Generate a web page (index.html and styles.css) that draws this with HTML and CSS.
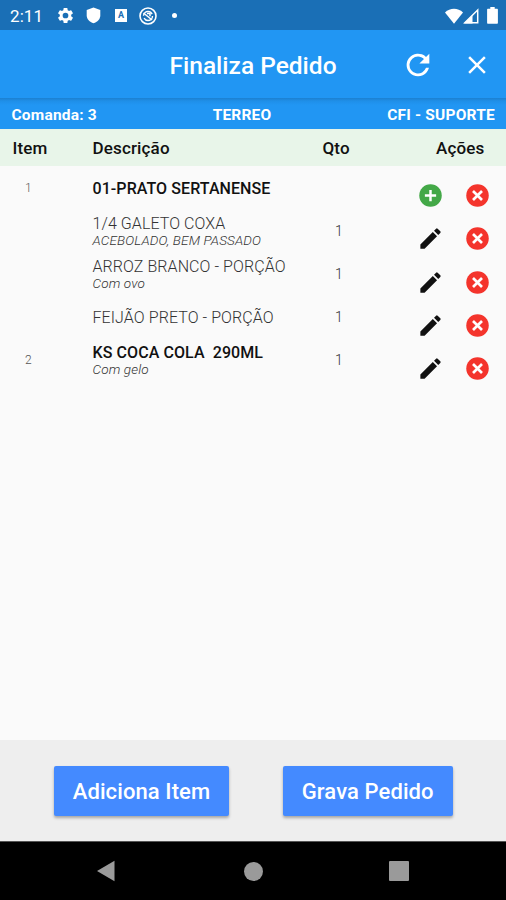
FILE: index.html
```html
<!DOCTYPE html>
<html lang="pt-BR">
<head>
    <meta charset="UTF-8">
    <title>Finaliza Pedido</title>
    <link rel="stylesheet" href="styles.css">
</head>
<body>
    <svg class="symbols" width="0" height="0">
        <symbol id="cancel" viewBox="0 0 24 24">
            <circle cx="12" cy="12" r="10"/>
            <path d="M8 8l8 8M16 8l-8 8" fill="none" stroke="#fff" stroke-width="2.400"/>
        </symbol>
        <symbol id="add" viewBox="0 0 24 24">
            <circle cx="12" cy="12" r="10"/>
            <path d="M12 7v10M7 12h10" fill="none" stroke="#fff" stroke-width="2.200"/>
        </symbol>
        <symbol id="edit" viewBox="0 0 24 24">
            <path d="M3 17.250V21h3.750L17.810 9.940l-3.750-3.750zM20.710 7.040a1 1 0 0 0 0-1.410l-2.340-2.340a1 1 0 0 0-1.410 0l-1.830 1.830 3.750 3.750z"/>
        </symbol>
    </svg>

    <div class="status-bar">
        <span class="clock">2:11</span>
        <svg class="gear" viewBox="0 0 24 24" width="19" height="19"><path fill="#fff" d="M19.140 12.940c.04-.3.06-.61.06-.94s-.02-.64-.07-.94l2.030-1.580a.49.49 0 0 0 .12-.61l-1.920-3.320a.49.49 0 0 0-.59-.22l-2.390.96a7 7 0 0 0-1.620-.94l-.36-2.540a.48.48 0 0 0-.48-.41h-3.840a.47.47 0 0 0-.47.41l-.36 2.540c-.59.24-1.130.57-1.620.94l-2.390-.96a.48.48 0 0 0-.59.22L2.740 8.870a.47.47 0 0 0 .12.61l2.030 1.580a6 6 0 0 0 0 1.880l-2.030 1.580a.49.49 0 0 0-.12.61l1.920 3.320c.12.22.37.29.59.22l2.390-.96c.5.38 1.030.7 1.620.94l.36 2.540c.05.24.24.41.48.41h3.840c.24 0 .44-.17.47-.41l.36-2.540a7 7 0 0 0 1.620-.94l2.390.96c.22.08.47 0 .59-.22l1.920-3.320a.47.47 0 0 0-.12-.61zM12 15.600A3.600 3.600 0 1 1 12 8.400a3.600 3.600 0 0 1 0 7.200z"/></svg>
        <svg class="shield" viewBox="0 0 14 17" width="15" height="17"><path fill="#fff" d="M7 .5l6.800 2.400v5.600c0 3.700-2.900 6.400-6.800 7.800C3.100 14.900.2 12.200.2 8.500V2.900z"/></svg>
        <span class="letter-icon">A</span>
        <svg class="sync" viewBox="0 0 18 18" width="18" height="18" fill="none" stroke="#fff"><circle cx="9" cy="9" r="8" stroke-width="1.600"/><circle cx="9" cy="9" r="4.500" stroke-width="1.400" stroke-dasharray="11.500 2.600"/><path stroke-width="1.500" d="M4.500 6l8.600 7M8 6.600h3v2.600"/></svg>
        <span class="dot"></span>
        <div class="signals">
            <svg viewBox="0 0 18 16" width="18" height="16"><path fill="#fff" d="M0 4.600C5 -.4 13-.4 18 4.600L9 15.700z"/></svg>
            <svg viewBox="0 0 16 16" width="16" height="16"><path fill="none" stroke="#fff" stroke-width="1.500" d="M1.800 14.700L14.700 2v12.700z"/><path fill="#fff" d="M1 15.400L9.500 7v8.400z"/></svg>
            <svg class="battery" viewBox="0 0 11 17" width="11" height="17"><path fill="#fff" d="M3.300 0h4.400v1.800h2.200c.6 0 1 .4 1 1v13c0 .6-.4 1-1 1H1.100c-.6 0-1-.4-1-1v-13c0-.6.4-1 1-1h2.200z"/></svg>
        </div>
    </div>

    <header class="app-bar">
        <h1>Finaliza Pedido</h1>
        <div class="app-actions">
            <svg viewBox="0 0 24 24" width="34" height="34"><path fill="#fff" d="M17.650 6.350A8 8 0 1 0 19.730 14h-2.080A6 6 0 1 1 12 6c1.660 0 3.140.69 4.220 1.780L13 11h7V4z"/></svg>
            <svg viewBox="0 0 24 24" width="30" height="30"><path fill="#fff" d="M19 6.410L17.590 5 12 10.590 6.410 5 5 6.410 10.590 12 5 17.590 6.410 19 12 13.410 17.590 19 19 17.590 13.410 12z"/></svg>
        </div>
    </header>

    <div class="info-bar">
        <span>Comanda: 3</span>
        <span>TERREO</span>
        <span>CFI - SUPORTE</span>
    </div>

    <div class="row table-head">
        <span class="head-item">Item</span>
        <span>Descrição</span>
        <span>Qto</span>
        <span class="head-actions">Ações</span>
    </div>

    <main class="items">
        <div class="row item">
            <div class="cell number">1</div>
            <div class="cell"><b>01-PRATO SERTANENSE</b></div>
            <div class="cell qty"></div>
            <div class="actions">
                <svg class="green"><use href="#add"/></svg>
                <svg class="red"><use href="#cancel"/></svg>
            </div>
        </div>
        <div class="row item">
            <div class="cell number"></div>
            <div class="cell"><span>1/4 GALETO COXA</span><i>ACEBOLADO, BEM PASSADO</i></div>
            <div class="cell qty">1</div>
            <div class="actions">
                <svg class="pencil"><use href="#edit"/></svg>
                <svg class="red"><use href="#cancel"/></svg>
            </div>
        </div>
        <div class="row item">
            <div class="cell number"></div>
            <div class="cell"><span>ARROZ BRANCO - PORÇÃO</span><i>Com ovo</i></div>
            <div class="cell qty">1</div>
            <div class="actions">
                <svg class="pencil"><use href="#edit"/></svg>
                <svg class="red"><use href="#cancel"/></svg>
            </div>
        </div>
        <div class="row item">
            <div class="cell number"></div>
            <div class="cell"><span>FEIJÃO PRETO - PORÇÃO</span></div>
            <div class="cell qty">1</div>
            <div class="actions">
                <svg class="pencil"><use href="#edit"/></svg>
                <svg class="red"><use href="#cancel"/></svg>
            </div>
        </div>
        <div class="row item">
            <div class="cell number">2</div>
            <div class="cell"><b>KS COCA COLA&nbsp; 290ML</b><i>Com gelo</i></div>
            <div class="cell qty">1</div>
            <div class="actions">
                <svg class="pencil"><use href="#edit"/></svg>
                <svg class="red"><use href="#cancel"/></svg>
            </div>
        </div>
    </main>

    <footer class="footer">
        <button class="btn btn-add">Adiciona Item</button>
        <button class="btn btn-save">Grava Pedido</button>
    </footer>

    <nav class="nav-bar">
        <svg viewBox="0 0 20 22" width="20" height="22"><path fill="#9a9a9a" d="M1 11L18.500.7v20.600z"/></svg>
        <span class="home"></span>
        <span class="recent"></span>
    </nav>
</body>
</html>
```
FILE: styles.css
```css
* {
    box-sizing: border-box;
}

body {
    margin: 0;
    height: 900px;
    display: flex;
    flex-direction: column;
    background: #fafafa;
    font-family: Roboto, sans-serif;
    color: #111;
    overflow: hidden;
}

.symbols {
    display: none;
}

.status-bar {
    height: 30px;
    flex: none;
    display: flex;
    align-items: center;
    padding: 1px 8px 0 10px;
    background: #1a6fb6;
    color: #fff;
}

.clock {
    width: 46px;
    font-size: 17px;
    letter-spacing: 0.1px;
}

.shield {
    margin-left: 11px;
}

.letter-icon {
    width: 12px;
    height: 13px;
    margin-left: 14px;
    background: #fff;
    color: #1a6fb6;
    font-size: 9px;
    font-weight: 700;
    line-height: 13px;
    text-align: center;
}

.sync {
    margin-left: 12px;
}

.dot {
    width: 5px;
    height: 5px;
    margin-left: 15px;
    border-radius: 50%;
    background: #fff;
}

.signals {
    display: flex;
    align-items: center;
    margin-left: auto;
}

.battery {
    margin-left: 8px;
}

.app-bar {
    height: 68px;
    flex: none;
    display: flex;
    align-items: center;
    padding: 2px 14px 0 169.5px;
    background: #2196f3;
    color: #fff;
}

.app-bar h1 {
    margin: 0;
    font-size: 24.5px;
    font-weight: 500;
    white-space: nowrap;
}

.app-actions {
    display: flex;
    align-items: center;
    gap: 27px;
    margin-left: auto;
}

.info-bar {
    height: 31px;
    flex: none;
    display: flex;
    justify-content: space-between;
    align-items: center;
    padding: 2px 11px 0 11.5px;
    background: linear-gradient(#1c80d0, #1f8fe8 3px, #2196f3 7px);
    color: #fff;
    font-size: 15.5px;
    font-weight: 700;
    letter-spacing: 0.2px;
    white-space: nowrap;
}

.row {
    display: grid;
    grid-template-columns: 80px 230px 76px 1fr;
    padding: 0 17px 0 12.5px;
}

.table-head {
    height: 37px;
    flex: none;
    align-items: center;
    padding-top: 1px;
    background: #e8f5e9;
    font-size: 17px;
    font-weight: 500;
    letter-spacing: 0.15px;
    white-space: nowrap;
}

.head-actions {
    padding-left: 37.5px;
}

.items {
    flex: 1;
    padding-top: 8.2px;
}

.item {
    height: 43.2px;
}

.cell {
    height: 28px;
    display: flex;
    flex-direction: column;
    justify-content: center;
    color: #333;
    font-size: 16px;
    font-weight: 300;
    letter-spacing: 0.08px;
    line-height: 17px;
    white-space: nowrap;
}

.cell b {
    color: #111;
    font-weight: 500;
}

.cell i {
    font-size: 13.5px;
    letter-spacing: 0.15px;
    line-height: 16px;
}

.number {
    padding-left: 12.5px;
    color: #555;
    font-size: 12px;
}

.qty {
    padding-left: 12.5px;
    font-size: 14px;
}

.actions {
    display: flex;
    align-items: center;
    gap: 20px;
    padding-left: 18px;
}

.actions svg {
    width: 27px;
    height: 27px;
    flex: none;
}

.green {
    fill: #43a847;
}

.red {
    fill: #f4342c;
}

.pencil {
    fill: #111;
}

.footer {
    height: 101px;
    flex: none;
    display: flex;
    align-items: center;
    gap: 54px;
    padding: 1px 0 0 54px;
    background: #eee;
}

.btn {
    height: 50px;
    padding: 0;
    border: none;
    border-radius: 2px;
    background: #448aff;
    box-shadow: 0 2px 3px rgba(0, 0, 0, 0.3);
    color: #fff;
    font-family: inherit;
    font-size: 22px;
    font-weight: 500;
}

.btn-add {
    width: 175px;
    letter-spacing: 0.1px;
}

.btn-save {
    width: 169.5px;
    letter-spacing: 0.1px;
}

.nav-bar {
    height: 59px;
    flex: none;
    display: flex;
    align-items: center;
    padding-left: 96px;
    border-top: 1px solid #555;
    background: #000;
}

.home {
    width: 19px;
    height: 19px;
    margin-left: 128px;
    border-radius: 50%;
    background: #9a9a9a;
}

.recent {
    width: 20px;
    height: 20px;
    margin-left: 126px;
    border-radius: 1px;
    background: #9a9a9a;
}
```
